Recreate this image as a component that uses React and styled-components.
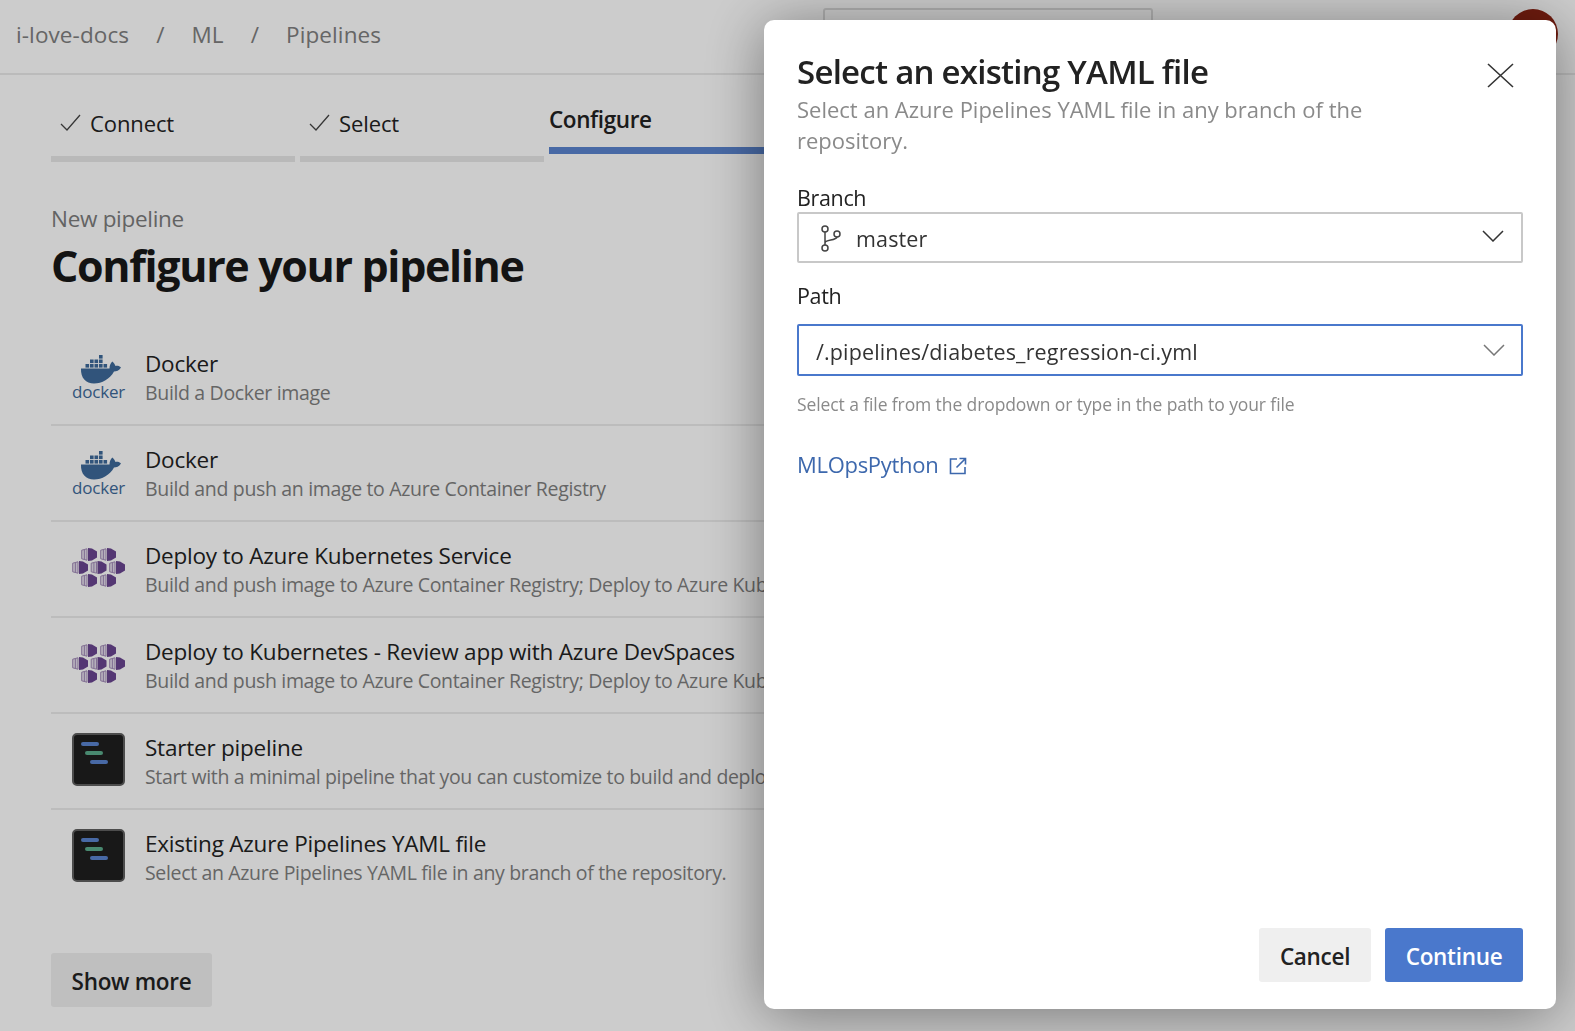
import styled, { createGlobalStyle } from "styled-components";

// *** data
const templates = [
  { icon: "docker", title: "Docker", text: "Build a Docker image" },
  { icon: "docker", title: "Docker", text: "Build and push an image to Azure Container Registry" },
  {
    icon: "kube",
    title: "Deploy to Azure Kubernetes Service",
    text: "Build and push image to Azure Container Registry; Deploy to Azure Kubernetes Service",
  },
  {
    icon: "kube",
    title: "Deploy to Kubernetes - Review app with Azure DevSpaces",
    text: "Build and push image to Azure Container Registry; Deploy to Azure Kubernetes Service",
  },
  {
    icon: "pipeline",
    title: "Starter pipeline",
    text: "Start with a minimal pipeline that you can customize to build and deploy your code.",
  },
  {
    icon: "pipeline",
    title: "Existing Azure Pipelines YAML file",
    text: "Select an Azure Pipelines YAML file in any branch of the repository.",
  },
];

const FONT = '"Open Sans", "Noto Sans", "Liberation Sans", sans-serif';

// *** styled components
const GlobalStyle = createGlobalStyle`
  html, body {
    margin: 0;
    height: 100%;
    overflow: hidden;
    background: #fff;
    font-family: ${FONT};
  }
`;

const Page = styled.div`
  width: 1575px;
  height: 1031px;
  overflow: hidden;
`;

const Header = styled.header`
  display: flex;
  align-items: center;
  height: 68px;
  padding: 0 17px 5px 16px;
  border-bottom: 2px solid #eaeaea;
`;

const Crumb = styled.span`
  font-size: 22.5px;
  letter-spacing: 0.1px;
  color: #808080;
`;

const Slash = styled(Crumb)`
  margin: 0 27px;
`;

const SearchBox = styled.div`
  width: 330px;
  height: 52px;
  margin: 0 355px 0 auto;
  box-sizing: border-box;
  border: 2px solid #dcdcdc;
  border-radius: 3px;
`;

const Avatar = styled.div`
  width: 50px;
  height: 50px;
  border-radius: 50%;
  background: #8a2212;
`;

const Tabs = styled.nav`
  display: flex;
  gap: 5px;
  height: 87px;
  padding-left: 51px;
`;

const Tab = styled.div`
  display: flex;
  align-items: center;
  gap: 9px;
  width: 244px;
  box-sizing: border-box;
  height: ${(props) => (props.$active ? "79px" : "87px")};
  padding: ${(props) => (props.$active ? "17px 0 0 0" : "15px 0 0 9px")};
  border-bottom: ${(props) => (props.$active ? "7px solid #5a84cf" : "6px solid #e8e8e8")};
  font-size: ${(props) => (props.$active ? "22.5px" : "22px")};
  letter-spacing: ${(props) => (props.$active ? "-0.4px" : "-0.1px")};
  font-weight: ${(props) => (props.$active ? 600 : 400)};
  color: #222;
`;

const Main = styled.main`
  padding: 43px 0 0 51px;
`;

const Eyebrow = styled.div`
  font-size: 22.5px;
  line-height: 28px;
  letter-spacing: -0.3px;
  color: #7c7c7c;
`;

const Heading = styled.h1`
  margin: 2px 0 0;
  font-size: 43px;
  line-height: 62px;
  font-weight: 700;
  letter-spacing: -1.35px;
  color: #181818;
`;

const List = styled.ul`
  list-style: none;
  margin: 33px 0 0;
  padding: 0;
  width: 1000px;
`;

const Row = styled.li`
  display: flex;
  gap: 20px;
  height: 96px;
  box-sizing: border-box;
  padding: 19px 0 0 21px;
  border-bottom: ${(props) => (props.$last ? "none" : "2px solid #ececec")};
`;

const IconBox = styled.div`
  flex: none;
  width: 53px;
  height: 53px;
`;

const RowText = styled.div`
  min-width: 0;
`;

const RowTitle = styled.div`
  font-size: 22.5px;
  line-height: 30px;
  letter-spacing: -0.22px;
  white-space: nowrap;
  color: #222;
`;

const RowDesc = styled.div`
  margin-top: -1px;
  font-size: 19.5px;
  line-height: 29px;
  letter-spacing: -0.34px;
  white-space: nowrap;
  color: #7f7f7f;
`;

const ShowMore = styled.button`
  display: block;
  width: 161px;
  height: 54px;
  margin-top: 47px;
  padding: 2px 0 0;
  border: none;
  border-radius: 3px;
  background: #efefef;
  font-family: ${FONT};
  font-size: 22.5px;
  font-weight: 600;
  letter-spacing: -0.3px;
  color: #222;
`;

const Scrim = styled.div`
  position: fixed;
  inset: 0;
  background: rgba(0, 0, 0, 0.2);
`;

const Modal = styled.aside`
  position: fixed;
  top: 20px;
  left: 764px;
  width: 792px;
  height: 989px;
  box-sizing: border-box;
  display: flex;
  flex-direction: column;
  padding: 30px 33px 27px 33px;
  background: #fff;
  border-radius: 10px;
  box-shadow: 0 6px 60px rgba(0, 0, 0, 0.42);
`;

const ModalHead = styled.div`
  display: flex;
  justify-content: space-between;
  align-items: flex-start;
`;

const ModalTitle = styled.h2`
  margin: 0;
  font-size: 33px;
  line-height: 44px;
  font-weight: 600;
  letter-spacing: -0.75px;
  color: #222;
`;

const CloseButton = styled.button`
  display: flex;
  margin: 13px 9px 0 0;
  padding: 0;
  border: none;
  background: none;
`;

const Subtitle = styled.p`
  margin: 0;
  width: 600px;
  font-size: 22px;
  line-height: 31px;
  color: #8a8a8a;
`;

const FieldLabel = styled.label`
  display: block;
  margin-top: ${(props) => props.$top}px;
  font-size: 21.5px;
  line-height: 28px;
  letter-spacing: -0.35px;
  color: #222;
`;

const SelectBox = styled.div`
  display: flex;
  align-items: center;
  height: ${(props) => (props.$focus ? "52px" : "51px")};
  margin-top: ${(props) => (props.$focus ? "14px" : "0")};
  box-sizing: border-box;
  padding: ${(props) => (props.$focus ? "3px 16px 0 17px" : "1px 17px 0 21px")};
  border: 2px solid ${(props) => (props.$focus ? "#4a78cc" : "#c8c8c8")};
  border-radius: 2px;
  font-size: 21.5px;
  letter-spacing: 0.14px;
  color: #333;
`;

const SelectValue = styled.span`
  flex: 1;
  margin-left: ${(props) => (props.$indent ? "14px" : "0")};
`;

const ChevronSvg = styled.svg`
  margin-bottom: 4px;
`;

const Hint = styled.div`
  margin-top: 15px;
  font-size: 17.5px;
  line-height: 26px;
  letter-spacing: -0.1px;
  color: #8a8a8a;
`;

const ResourceLink = styled.a`
  display: flex;
  align-items: center;
  gap: 11px;
  margin-top: 32px;
  font-size: 22px;
  line-height: 30px;
  letter-spacing: -0.3px;
  color: #3d68ad;
`;

const LinkIcon = styled.svg`
  margin-top: 4px;
`;

const Footer = styled.div`
  display: flex;
  justify-content: flex-end;
  gap: 14px;
  margin-top: auto;
`;

const FooterButton = styled.button`
  height: 54px;
  width: ${(props) => (props.$primary ? "138px" : "112px")};
  padding: 2px 0 0;
  border: none;
  border-radius: 3px;
  background: ${(props) => (props.$primary ? "#4a78cc" : "#efefef")};
  color: ${(props) => (props.$primary ? "#fff" : "#222")};
  font-family: ${FONT};
  font-size: 22.5px;
  font-weight: 600;
  letter-spacing: -0.3px;
`;

const LogoSvg = styled.svg`
  display: block;
  overflow: visible;
`;

// *** icons
const Check = () => (
  <svg width="21" height="18" viewBox="0 0 21 18" fill="none" stroke="#444" strokeWidth="1.3">
    <path d="M1 10l6 6L20 1" />
  </svg>
);

const Chevron = ({ color }) => (
  <ChevronSvg width="22" height="12" viewBox="0 0 22 12" fill="none" stroke={color} strokeWidth="1.5">
    <path d="M1 1l10 10L21 1" />
  </ChevronSvg>
);

const CloseIcon = () => (
  <svg width="27" height="25" viewBox="0 0 27 25" fill="none" stroke="#333" strokeWidth="1.6">
    <path d="M1 1l25 23M26 1L1 24" />
  </svg>
);

const BranchIcon = () => (
  <svg width="22" height="27" viewBox="0 0 22 27" fill="none" stroke="#444" strokeWidth="1.5">
    <circle cx="5" cy="4" r="3" />
    <circle cx="5" cy="23" r="3" />
    <circle cx="17" cy="9" r="3" />
    <path d="M5 7v13M5 18c0-4 11-2 12-6" />
  </svg>
);

const ExternalIcon = () => (
  <LinkIcon width="18" height="18" viewBox="0 0 18 18" fill="none" stroke="#3d68ad" strokeWidth="1.6">
    <path d="M8 2H1.500v14.500H16V10M10.500 1.500h6V7.500M16.500 1.500L7.500 10.500" />
  </LinkIcon>
);

const DockerIcon = () => (
  <LogoSvg width="53" height="48" viewBox="0 -4 53 48">
    <g fill="#3e6a9a">
      <rect x="27" y="2" width="3.600" height="3.600" />
      <rect x="18" y="6.500" width="3.600" height="3.600" />
      <rect x="22.500" y="6.500" width="3.600" height="3.600" />
      <rect x="27" y="6.500" width="3.600" height="3.600" />
      <rect x="13.500" y="11" width="3.600" height="3.600" />
      <rect x="18" y="11" width="3.600" height="3.600" />
      <rect x="22.500" y="11" width="3.600" height="3.600" />
      <rect x="27" y="11" width="3.600" height="3.600" />
      <rect x="31.500" y="11" width="3.600" height="3.600" />
      <path d="M9 15.500H37.500C37.500 12.500 38.500 10 40.500 8.500C42 10 43 11.500 43.500 13C45.500 12.500 47.500 13 49 14.500C47 17.500 44.500 18.500 42 18.500C38 26 30 30.500 22 30.500C14 30.500 8.500 25 9 15.500Z" />
      <text x="26.500" y="44.500" textAnchor="middle" fontFamily={FONT} fontSize="17" letterSpacing="-0.2">
        docker
      </text>
    </g>
  </LogoSvg>
);

const kubeCells = [
  [9, 0],
  [28, 0],
  [0, 13],
  [18.500, 13],
  [37, 13],
  [9, 26],
  [28, 26],
];

const KubeIcon = () => (
  <LogoSvg width="53" height="48" viewBox="0 -7 53 48">
    {kubeCells.map(([x, y]) => (
      <g key={`${x}-${y}`} transform={`translate(${x} ${y})`}>
        <path d="M6 .8L.7 2.200v8.600L6 12.200z" fill="#e3dcea" stroke="#a28ab8" strokeWidth="1" />
        <path d="M3.400 2v9" stroke="#a28ab8" strokeWidth="1" fill="none" />
        <path d="M7 0l4 .5 5 3v6l-5 3-4 .5z" fill="#6a4590" />
      </g>
    ))}
  </LogoSvg>
);

const PipelineIcon = () => (
  <svg width="53" height="53" viewBox="0 0 53 53">
    <rect x="1" y="1" width="51" height="51" rx="4" fill="#1f1f1f" stroke="#606060" strokeWidth="2" />
    <rect x="9" y="9" width="18" height="4" rx="2" fill="#5a84cf" />
    <rect x="13" y="18" width="18" height="4" rx="2" fill="#5cac8c" />
    <rect x="18" y="27" width="18" height="4" rx="2" fill="#5a84cf" />
  </svg>
);

const icons = { docker: DockerIcon, kube: KubeIcon, pipeline: PipelineIcon };

const App = () => (
  <Page>
    <GlobalStyle />
    <Header>
      <Crumb>i-love-docs</Crumb>
      <Slash>/</Slash>
      <Crumb>ML</Crumb>
      <Slash>/</Slash>
      <Crumb>Pipelines</Crumb>
      <SearchBox />
      <Avatar />
    </Header>
    <Tabs>
      <Tab>
        <Check />
        Connect
      </Tab>
      <Tab>
        <Check />
        Select
      </Tab>
      <Tab $active>Configure</Tab>
    </Tabs>
    <Main>
      <Eyebrow>New pipeline</Eyebrow>
      <Heading>Configure your pipeline</Heading>
      <List>
        {templates.map((item, i) => {
          const Icon = icons[item.icon];
          return (
            <Row key={item.title + i} $last={i === templates.length - 1}>
              <IconBox>
                <Icon />
              </IconBox>
              <RowText>
                <RowTitle>{item.title}</RowTitle>
                <RowDesc>{item.text}</RowDesc>
              </RowText>
            </Row>
          );
        })}
      </List>
      <ShowMore>Show more</ShowMore>
    </Main>
    <Scrim />
    <Modal>
      <ModalHead>
        <ModalTitle>Select an existing YAML file</ModalTitle>
        <CloseButton>
          <CloseIcon />
        </CloseButton>
      </ModalHead>
      <Subtitle>Select an Azure Pipelines YAML file in any branch of the repository.</Subtitle>
      <FieldLabel $top={28}>Branch</FieldLabel>
      <SelectBox>
        <BranchIcon />
        <SelectValue $indent>master</SelectValue>
        <Chevron color="#333" />
      </SelectBox>
      <FieldLabel $top={19}>Path</FieldLabel>
      <SelectBox $focus>
        <SelectValue>/.pipelines/diabetes_regression-ci.yml</SelectValue>
        <Chevron color="#777" />
      </SelectBox>
      <Hint>Select a file from the dropdown or type in the path to your file</Hint>
      <ResourceLink>
        MLOpsPython
        <ExternalIcon />
      </ResourceLink>
      <Footer>
        <FooterButton>Cancel</FooterButton>
        <FooterButton $primary>Continue</FooterButton>
      </Footer>
    </Modal>
  </Page>
);

export default App;
